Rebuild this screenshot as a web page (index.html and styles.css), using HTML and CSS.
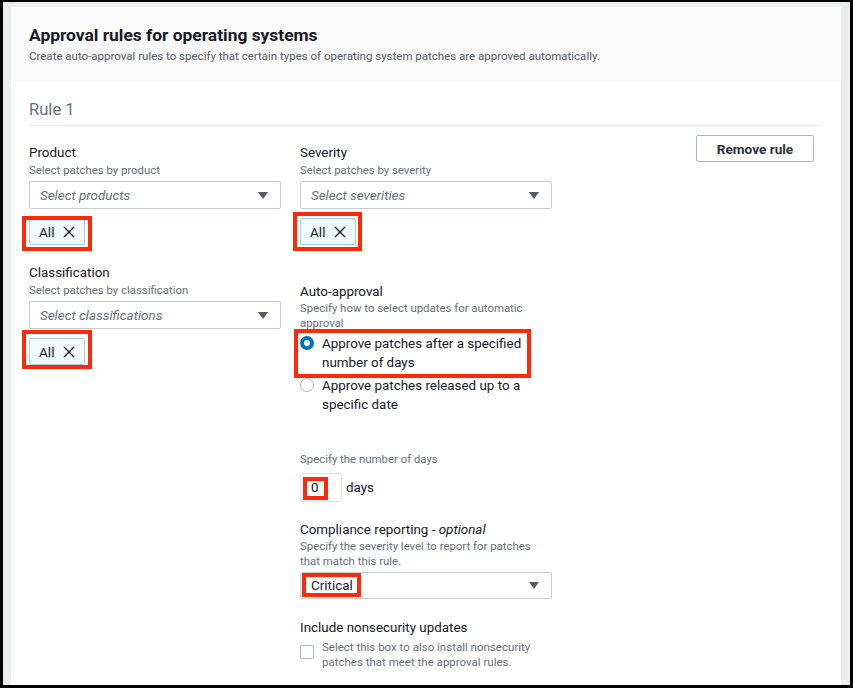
FILE: index.html
```html
<!DOCTYPE html>
<html lang="en">
<head>
<meta charset="utf-8">
<title>Approval rules for operating systems</title>
<link rel="stylesheet" href="styles.css">
</head>
<body>
<div class="frame">
  <div class="card">
    <div class="card-header">
      <h1 class="card-title">Approval rules for operating systems</h1>
      <p class="card-subtitle">Create auto-approval rules to specify that certain types of operating system patches are approved automatically.</p>
    </div>
    <div class="card-body">
      <div class="rule-title">Rule 1</div>
      <div class="rule-grid">
        <div class="col">
          <div class="field-label">Product</div>
          <div class="field-desc">Select patches by product</div>
          <div class="select"><span class="placeholder">Select products</span><svg class="caret" width="10" height="7" viewBox="0 0 10 7"><path d="M0 0h10L5 7z"/></svg></div>
          <div class="chip mark mark-chip-a"><span>All</span><svg class="chip-x" width="12" height="12" viewBox="0 0 12 12"><path d="M1 1l10 10M11 1L1 11"/></svg></div>

          <div class="field-label gap-class">Classification</div>
          <div class="field-desc">Select patches by classification</div>
          <div class="select"><span class="placeholder">Select classifications</span><svg class="caret" width="10" height="7" viewBox="0 0 10 7"><path d="M0 0h10L5 7z"/></svg></div>
          <div class="chip mark mark-chip-b"><span>All</span><svg class="chip-x" width="12" height="12" viewBox="0 0 12 12"><path d="M1 1l10 10M11 1L1 11"/></svg></div>
        </div>

        <div class="col">
          <div class="field-label">Severity</div>
          <div class="field-desc">Select patches by severity</div>
          <div class="select"><span class="placeholder">Select severities</span><svg class="caret" width="10" height="7" viewBox="0 0 10 7"><path d="M0 0h10L5 7z"/></svg></div>
          <div class="chip mark mark-chip-c"><span>All</span><svg class="chip-x" width="12" height="12" viewBox="0 0 12 12"><path d="M1 1l10 10M11 1L1 11"/></svg></div>

          <div class="field-label gap-auto">Auto-approval</div>
          <div class="field-desc tight">Specify how to select updates for automatic approval</div>
          <div class="radio-group">
            <div class="option mark mark-option">
              <span class="radio checked"></span>
              <span class="option-text">Approve patches after a specified number of days</span>
            </div>
            <div class="option">
              <span class="radio"></span>
              <span class="option-text">Approve patches released up to a specific date</span>
            </div>
          </div>

          <div class="field-desc gap-days">Specify the number of days</div>
          <div class="days-row">
            <div class="num-input mark mark-num">0</div>
            <span class="days-label">days</span>
          </div>

          <div class="field-label gap-compliance">Compliance reporting - <em>optional</em></div>
          <div class="field-desc tight">Specify the severity level to report for patches that match this rule.</div>
          <div class="select select-value"><span class="value mark mark-value">Critical</span><svg class="caret" width="10" height="7" viewBox="0 0 10 7"><path d="M0 0h10L5 7z"/></svg></div>

          <div class="field-label gap-include">Include nonsecurity updates</div>
          <div class="check-row">
            <span class="checkbox"></span>
            <span class="check-text">Select this box to also install nonsecurity patches that meet the approval rules.</span>
          </div>
        </div>

        <div class="actions">
          <button class="btn" type="button">Remove rule</button>
        </div>
      </div>
    </div>
  </div>
</div>
</body>
</html>
```

FILE: styles.css
```css
* { box-sizing: border-box; }

html, body {
  margin: 0;
  padding: 0;
  background: #000;
}

body {
  font-family: Roboto, "Liberation Sans", Arial, sans-serif;
  color: #16191f;
}

.frame {
  width: 853px;
  height: 688px;
  border: 3px solid #000;
  border-top-width: 2px;
  background: #eceded;
  padding: 5px 9px 0 8px;
  overflow: hidden;
}

.card {
  background: #fff;
  height: 100%;
}

.card-header {
  background: #fafafa;
  height: 74px;
  padding: 17px 18px 0;
}

.card-title {
  margin: 0;
  font-size: 17.4px;
  line-height: 22px;
  font-weight: 700;
  color: #16191f;
}

.card-subtitle {
  margin: 2px 0 0;
  font-size: 11.5px;
  line-height: 16px;
  color: #545b64;
}

.card-body {
  padding: 17px 19px 0 18px;
}

.rule-title {
  font-size: 16.6px;
  line-height: 24px;
  color: #687078;
  padding-bottom: 3px;
  border-bottom: 1px solid #eaeded;
}

.rule-grid {
  display: flex;
  padding-top: 9px;
}

.col {
  width: 252px;
  padding-top: 8px;
  display: flex;
  flex-direction: column;
  align-items: stretch;
}

.col + .col { margin-left: 19px; }

.actions {
  flex: 1;
  display: flex;
  justify-content: flex-end;
  align-items: flex-start;
  padding-right: 8px;
}

.btn {
  font-family: inherit;
  font-size: 13.6px;
  font-weight: 700;
  color: #2b3036;
  background: #fff;
  border: 1px solid #aab7b8;
  border-radius: 2px;
  width: 118px;
  height: 27px;
  padding: 0;
  margin: 0;
}

.field-label {
  font-size: 13.4px;
  line-height: 19px;
  color: #16191f;
}

.field-label em { font-style: italic; }

.field-desc {
  font-size: 11.4px;
  line-height: 16px;
  color: #687078;
}

.field-desc.tight { line-height: 15px; }

.gap-class { margin-top: 18px; }
.gap-auto { margin-top: 37px; }
.gap-days { margin-top: 37px; }
.gap-compliance { margin-top: 18.5px; }
.gap-include { margin-top: 19.5px; }

.select {
  margin-top: 3px;
  height: 28px;
  border: 1px solid #c6cdce;
  border-radius: 2px;
  padding: 0 12px 0 10px;
  display: flex;
  align-items: center;
  justify-content: space-between;
  background: #fff;
}

.select-value {
  margin-top: 2.5px;
  height: 27px;
}

.placeholder {
  font-size: 13.4px;
  font-style: italic;
  color: #687078;
}

.value {
  font-size: 13.4px;
  color: #16191f;
}

.caret { fill: #545b64; }

.chip {
  margin-top: 9px;
  align-self: flex-start;
  width: 56px;
  height: 27px;
  border: 1px solid #a9cbe3;
  border-radius: 2px;
  background: #f1faff;
  display: flex;
  align-items: center;
  padding: 0 0 0 9px;
  gap: 9px;
  font-size: 13.6px;
}

.chip-x {
  stroke: #16191f;
  stroke-width: 1.4;
  fill: none;
}

/* red annotation boxes drawn over the screenshot */
.mark { position: relative; }
.mark::after {
  content: "";
  position: absolute;
  border: 4px solid #fa2a0a;
  pointer-events: none;
}
.mark-chip-a::after { left: -8px; right: -8px; top: -3px; bottom: -7px; }
.mark-chip-b::after { left: -8px; right: -8px; top: -9px; bottom: -5px; }
.mark-chip-c::after { left: -8px; right: -7px; top: -7px; bottom: -7px; }
.mark-option::after { left: -6px; right: 21px; top: -5px; bottom: -6px; }
.mark-num::after { left: 2px; right: 13px; top: 3px; bottom: 1px; }
.mark-value::after { left: -9px; right: -8px; top: -5px; bottom: -4px; }

.radio-group {
  margin-top: 2.5px;
  display: flex;
  flex-direction: column;
  gap: 4px;
}

.option {
  display: flex;
  align-items: flex-start;
  gap: 8px;
}

.radio {
  flex: none;
  width: 14px;
  height: 14px;
  margin-top: 2.5px;
  border-radius: 50%;
  border: 1.5px solid #aab7b8;
  background: #fff;
}

.radio.checked {
  border: 4.5px solid #0073bb;
}

.option-text {
  font-size: 13.4px;
  line-height: 19px;
  color: #16191f;
}

.days-row {
  margin-top: 6px;
  display: flex;
  align-items: center;
}

.num-input {
  width: 42px;
  height: 29px;
  border: 1px solid #dfe3e4;
  border-radius: 2px;
  padding-left: 10px;
  display: flex;
  align-items: center;
  font-size: 13.4px;
}

.days-label {
  margin-left: 4px;
  font-size: 13.4px;
}

.check-row {
  margin-top: 3px;
  display: flex;
  align-items: flex-start;
  gap: 8px;
}

.checkbox {
  flex: none;
  width: 14px;
  height: 14px;
  margin-top: 4.5px;
  border: 1px solid #aab7b8;
  border-radius: 2px;
  background: #fff;
}

.check-text {
  font-size: 11.5px;
  line-height: 15px;
  color: #687078;
}
```
